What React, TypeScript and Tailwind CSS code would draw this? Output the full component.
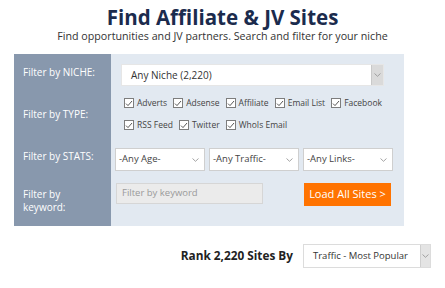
import type { ReactNode } from 'react';

const font = { fontFamily: '"Open Sans", "DejaVu Sans", sans-serif' };

function Chevron() {
  return (
    <svg width="7" height="4" viewBox="0 0 7 4">
      <path d="M0.5 0.5 L3.5 3.3 L6.5 0.5" fill="none" stroke="#9a9a9a" strokeWidth="0.9" />
    </svg>
  );
}

function Check({ label }: { label: string }) {
  return (
    <span className="flex items-center gap-[3px] text-[8.5px] text-[#444]">
      <span className="flex h-[10px] w-[10px] items-center justify-center border border-[#7d7d7d] bg-white">
        <svg width="8" height="7" viewBox="0 0 8 7">
          <path d="M1 3.6 L3 5.6 L7 1" fill="none" stroke="#444" strokeWidth="0.9" />
        </svg>
      </span>
      {label}
    </span>
  );
}

function StatSelect({ label }: { label: string }) {
  return (
    <div className="flex h-[23px] w-[90px] items-center justify-between border border-[#cfcfcf] bg-white pl-[3px] pr-[5px] text-[9.5px] text-[#444]">
      <span>{label}</span>
      <Chevron />
    </div>
  );
}

function Label({ children }: { children: ReactNode }) {
  return (
    <div className="flex items-center whitespace-nowrap bg-[#8898ad] pl-[9px] text-[10px] leading-[13px] text-white">
      <span>{children}</span>
    </div>
  );
}

/** Affiliate & JV site finder: filter panel plus rank selector. */
export default function App() {
  return (
    <div className="h-[288px] w-[445px] bg-white" style={font}>
      <div className="flex flex-col items-center pt-[5px]">
        <h1 className="text-[20.5px] font-bold leading-[24px] text-[#1b2b4d]">Find Affiliate &amp; JV Sites</h1>
        <p className="mt-[1px] text-[10.7px] leading-[12px] text-[#333]">Find opportunities and JV partners. Search and filter for your niche</p>
      </div>

      <div className="ml-[14px] mt-[12px] grid w-[390px] grid-cols-[97px_1fr] bg-[#e2e9f1]">
        <Label>Filter by NICHE:</Label>
        <div className="pb-[4px] pl-[10px] pr-[20px] pt-[10px]">
          <div className="flex h-[22px] items-stretch border border-[#e6e6e6] bg-white">
            <span className="flex flex-1 items-center pl-[9px] text-[10px] text-[#333]">Any Niche (2,220)</span>
            <span className="flex w-[12px] items-center justify-center border-l border-[#c9c9c9] bg-[#dadada]">
              <Chevron />
            </span>
          </div>
        </div>

        <Label>Filter by TYPE:</Label>
        <div className="flex flex-col gap-[10px] pb-[7px] pl-[13px] pt-[7px]">
          <div className="flex h-[12px] items-center gap-[6px]">
            <Check label="Adverts" />
            <Check label="Adsense" />
            <Check label="Affiliate" />
            <Check label="Email List" />
            <Check label="Facebook" />
          </div>
          <div className="flex h-[12px] items-center gap-[6px]">
            <Check label="RSS Feed" />
            <Check label="Twitter" />
            <Check label="WhoIs Email" />
          </div>
        </div>

        <Label>Filter by STATS:</Label>
        <div className="flex gap-[4px] pb-[4px] pl-[4px] pt-[10px]">
          <StatSelect label="-Any Age-" />
          <StatSelect label="-Any Traffic-" />
          <StatSelect label="-Any Links-" />
        </div>

        <Label>
          Filter by
          <br />
          keyword:
        </Label>
        <div className="flex items-start justify-between pb-[20px] pl-[5px] pr-[13px] pt-[8px]">
          <div className="flex h-[21px] w-[147px] items-center border border-[#d6d6d6] bg-[#ebebeb] pl-[5px] text-[9.5px] text-[#9a9a9a]">
            Filter by keyword
          </div>
          <button className="flex h-[23px] w-[87px] items-center justify-center bg-[#ff7300] text-[11px] text-white">
            Load All Sites &gt;
          </button>
        </div>
      </div>

      <div className="mt-[18px] flex items-center justify-end pr-[14px]">
        <span className="mr-[10px] text-[11.8px] font-bold text-[#222]">Rank 2,220 Sites By</span>
        <div className="flex h-[24px] w-[128px] items-stretch border border-[#dcdcdc] bg-white">
          <span className="flex flex-1 items-center pl-[9px] text-[9.5px] text-[#333]">Traffic - Most Popular</span>
          <span className="flex w-[10px] items-center justify-center border-l border-[#cfcfcf] bg-[#e4e4e4]">
            <Chevron />
          </span>
        </div>
      </div>
    </div>
  );
}
